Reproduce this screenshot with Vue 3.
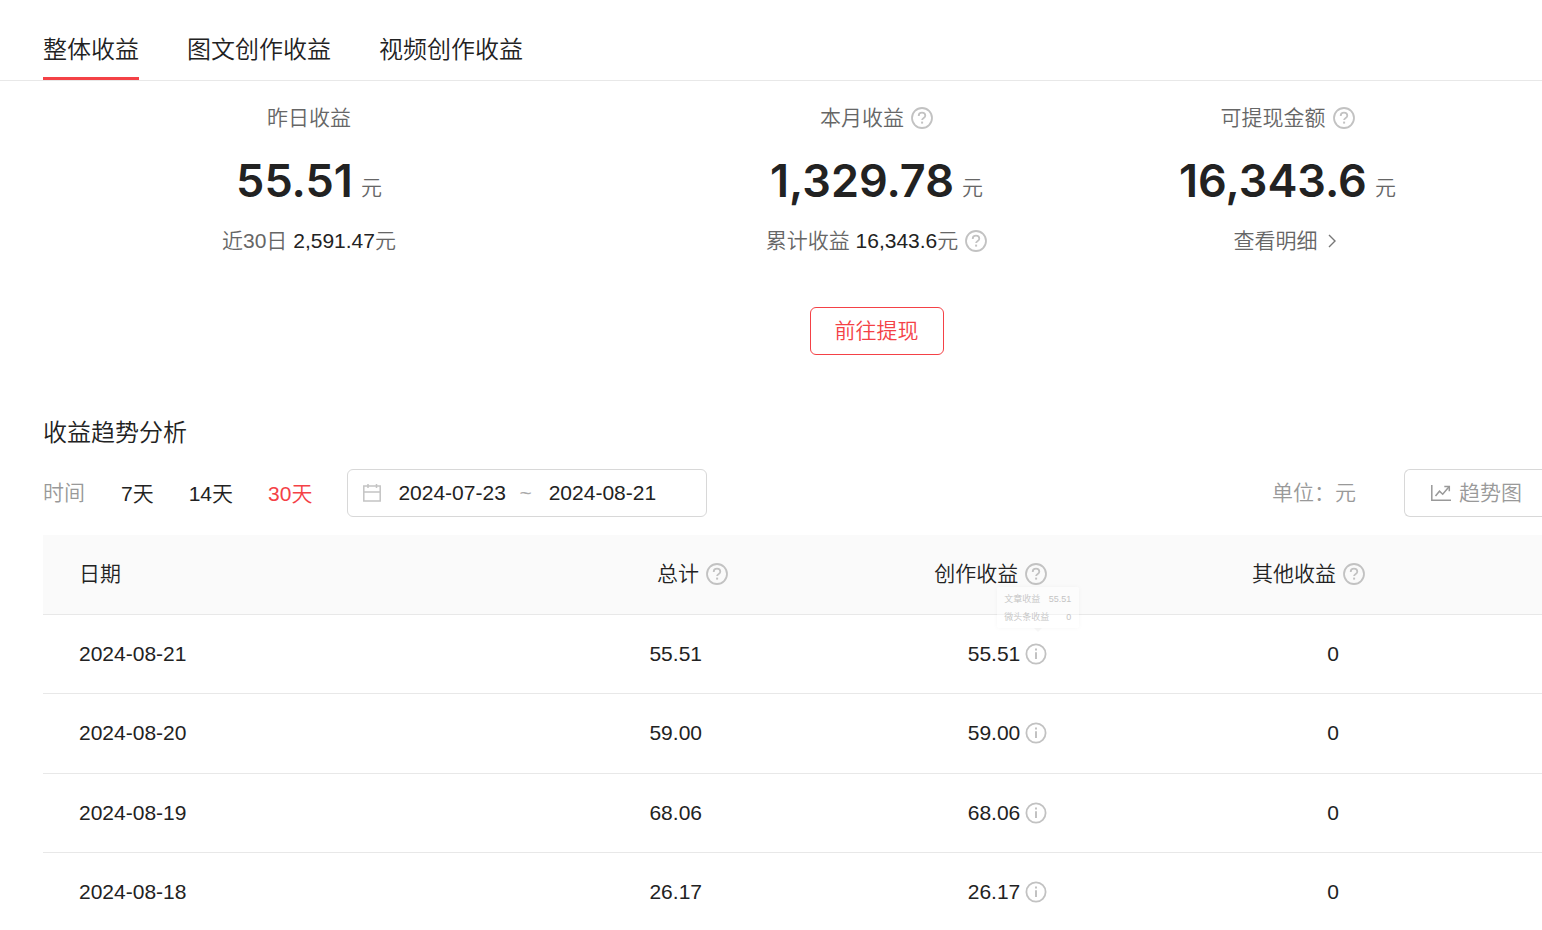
<script setup>
import { h, ref } from 'vue'

const QuestionIcon = () =>
  h('svg', { viewBox: '0 0 22 22', width: 22, height: 22, fill: 'none', stroke: '#c2c2c2', 'aria-hidden': 'true' }, [
    h('circle', { cx: 11, cy: 11, r: 10, 'stroke-width': 1.8 }),
    h('path', { d: 'M7.700 8.900c0-2 1.400-3.200 3.300-3.200s3.300 1.200 3.300 3c0 2.200-3.200 2.200-3.200 4.400', 'stroke-width': 1.8 }),
    h('path', { d: 'M10.1 14.600h2v2h-2z', fill: '#c2c2c2', stroke: 'none' }),
  ])

const InfoIcon = () =>
  h('svg', { viewBox: '0 0 22 22', width: 22, height: 22, fill: 'none', stroke: '#c2c2c2', 'aria-hidden': 'true' }, [
    h('circle', { cx: 11, cy: 11, r: 9.6, 'stroke-width': 1.8 }),
    h('path', { d: 'M11 9.2v6.8', 'stroke-width': 2 }),
    h('path', { d: 'M10 5.6h2v2h-2z', fill: '#c2c2c2', stroke: 'none' }),
  ])

const tabs = ['整体收益', '图文创作收益', '视频创作收益']
const activeTab = ref(0)

const ranges = ['7天', '14天', '30天']
const activeRange = ref(2)
const startDate = ref('2024-07-23')
const endDate = ref('2024-08-21')

const rows = [
  { date: '2024-08-21', total: '55.51', other: '0', tip: true },
  { date: '2024-08-20', total: '59.00', other: '0' },
  { date: '2024-08-19', total: '68.06', other: '0' },
  { date: '2024-08-18', total: '26.17', other: '0' },
]
</script>

<template>
  <main class="page">
    <nav class="tabs">
      <button
        v-for="(tab, i) in tabs"
        :key="tab"
        type="button"
        class="tab"
        :class="{ active: i === activeTab }"
        @click="activeTab = i"
      >{{ tab }}</button>
    </nav>

    <section class="stats">
      <div class="stat">
        <div class="label">昨日收益</div>
        <div class="amount"><strong>55.51</strong><span>元</span></div>
        <div class="sub">近30日&nbsp;<b>2,591.47</b>元</div>
      </div>
      <div class="stat">
        <div class="label">本月收益<QuestionIcon class="icon" /></div>
        <div class="amount"><strong>1,329.78</strong><span>元</span></div>
        <div class="sub">累计收益&nbsp;<b>16,343.6</b>元<QuestionIcon class="icon" /></div>
        <button type="button" class="withdraw">前往提现</button>
      </div>
      <div class="stat">
        <div class="label">可提现金额<QuestionIcon class="icon" /></div>
        <div class="amount"><strong>16,343.6</strong><span>元</span></div>
        <a href="#" class="sub">查看明细<svg class="arrow" viewBox="0 0 10 14" width="10" height="14" fill="none" stroke="#777" stroke-width="1.4" aria-hidden="true"><path d="M2 1l6 6-6 6" /></svg></a>
      </div>
    </section>

    <section class="trend">
      <h2>收益趋势分析</h2>
      <div class="filters">
        <span class="muted">时间</span>
        <div class="ranges">
          <button
            v-for="(range, i) in ranges"
            :key="range"
            type="button"
            :class="{ active: i === activeRange }"
            @click="activeRange = i"
          >{{ range }}</button>
        </div>
        <div class="picker">
          <svg viewBox="0 0 18 18" width="18" height="18" fill="none" stroke="#c4c4c4" stroke-width="1.5" aria-hidden="true">
            <path d="M.8 2h16.4v15H.8zM.8 8h16.4M5 0v4M13.500 0v4" />
          </svg>
          <input v-model="startDate" type="text" aria-label="开始日期" />
          <span class="tilde">~</span>
          <input v-model="endDate" type="text" aria-label="结束日期" />
        </div>
        <span class="muted unit">单位：元</span>
        <button type="button" class="chart">
          <svg viewBox="0 0 20 16" width="20" height="16" fill="none" stroke="#999" stroke-width="1.5" aria-hidden="true">
            <path d="M.8 0v15.200H20" />
            <path d="M4.500 11l4-4.800 3.200 3L17.800 2" />
            <path d="M13.300 1.600h5v4.600" />
          </svg>
          趋势图
        </button>
      </div>

      <table>
        <thead>
          <tr>
            <th class="date" scope="col">日期</th>
            <th class="total" scope="col"><span class="cell">总计<QuestionIcon class="icon" /></span></th>
            <th class="create" scope="col"><span class="cell">创作收益<QuestionIcon class="icon" /></span></th>
            <th class="other" scope="col"><span class="cell">其他收益<QuestionIcon class="icon" /></span></th>
          </tr>
        </thead>
        <tbody>
          <tr v-for="row in rows" :key="row.date">
            <td class="date">{{ row.date }}</td>
            <td class="total"><span class="cell plain">{{ row.total }}</span></td>
            <td class="create">
              <span class="cell">{{ row.total }}<span class="info"><InfoIcon /><span v-if="row.tip" class="tip" role="tooltip">
                <span class="tip-row"><span>文章收益</span><span>55.51</span></span>
                <span class="tip-row"><span>微头条收益</span><span>0</span></span>
              </span></span></span>
            </td>
            <td class="other"><span class="cell plain">{{ row.other }}</span></td>
          </tr>
        </tbody>
      </table>
    </section>
  </main>
</template>

<style>
body {
  margin: 0;
  background: #fff;
}
</style>

<style scoped>
.page {
  height: 100vh;
  overflow: hidden;
  font-family: "Liberation Sans", "Noto Sans CJK SC", sans-serif;
  font-size: 21px;
  font-weight: 350;
  line-height: 32px;
  color: #222;
}
svg {
  display: block;
  flex: none;
}
button,
input {
  margin: 0;
  padding: 0;
  border: 0;
  background: none;
  font: inherit;
  color: inherit;
}
button {
  cursor: pointer;
}
.tabs {
  display: flex;
  gap: 48px;
  height: 80px;
  padding-left: 43px;
  border-bottom: 1px solid #e8e8e8;
}
.tab {
  padding-top: 22px;
  border-bottom: 3px solid transparent;
  font-size: 24px;
}
.tab.active {
  border-color: #f44146;
}
.stats {
  display: grid;
  grid-template-columns: 618fr 517fr 305fr 102fr;
  padding-top: 21px;
}
.stat {
  display: flex;
  flex-direction: column;
  align-items: center;
  white-space: nowrap;
}
.label,
.sub {
  display: flex;
  align-items: center;
  color: #666;
  text-decoration: none;
}
.icon {
  margin-left: 7px;
}
.arrow {
  margin: 0 5px 0 9px;
}
.amount {
  display: flex;
  align-items: flex-end;
  height: 64px;
  margin: 15px 0 12px;
  line-height: 50px;
  color: #666;
}
.amount strong {
  margin-right: 8px;
  font-family: Inter, "Noto Sans", sans-serif;
  font-size: 45px;
  font-weight: 600;
  line-height: 64px;
  color: #222;
}
.sub b {
  font-weight: 400;
  color: #222;
}
.withdraw {
  height: 48px;
  margin-top: 50px;
  padding: 0 24px;
  border: 1px solid #f44146;
  border-radius: 6px;
  color: #f44146;
}
.trend {
  padding: 62px 0 0 43px;
}
h2 {
  margin: 0 0 20px;
  font-size: 24px;
  font-weight: 350;
}
.filters {
  display: flex;
  align-items: center;
  margin-bottom: 18px;
  white-space: nowrap;
}
.muted {
  color: #999;
}
.ranges {
  display: flex;
  gap: 35px;
  margin: 0 35px 0 36px;
  padding-top: 2px;
}
.ranges .active {
  color: #f44146;
}
.picker {
  display: flex;
  align-items: center;
  box-sizing: border-box;
  width: 360px;
  height: 48px;
  padding: 0 15px;
  border: 1px solid #d8d8d8;
  border-radius: 6px;
}
.picker input {
  width: 112px;
  margin-left: 17px;
}
.tilde {
  margin-left: 9px;
  color: #aaa;
}
.picker .tilde + input {
  margin-left: 17px;
}
.unit {
  margin-left: auto;
}
.chart {
  display: flex;
  align-items: center;
  gap: 8px;
  height: 48px;
  margin-left: 48px;
  padding: 0 20px 0 26px;
  border: 1px solid #d8d8d8;
  border-right: 0;
  border-radius: 6px 0 0 6px;
  color: #999;
}
table {
  width: 100%;
  table-layout: fixed;
  border-collapse: separate;
  border-spacing: 0;
}
th,
td {
  box-sizing: border-box;
  height: 79px;
  padding: 0 36px 0 0;
  border-bottom: 1px solid #e8e8e8;
  font-weight: 350;
  text-align: right;
}
th {
  height: 80px;
  padding-bottom: 2px;
  background: #fafafa;
}
tbody tr:nth-child(even) td {
  height: 80px;
  padding-bottom: 2px;
}
th.date,
td.date {
  padding-left: 36px;
  text-align: left;
}
.date {
  width: 27%;
}
.total {
  width: 21.1%;
}
.create {
  width: 21.3%;
}
.other {
  width: 30.6%;
}
th.other,
td.other {
  padding-right: 177px;
}
.cell {
  display: flex;
  align-items: center;
  justify-content: flex-end;
}
.plain {
  padding-right: 26px;
}
.info {
  position: relative;
  margin-left: 5px;
}
.tip {
  position: absolute;
  bottom: 37px;
  left: 50%;
  box-sizing: border-box;
  width: 82px;
  height: 41px;
  margin-left: -39px;
  padding: 3px 8px 0 7px;
  border-radius: 2px;
  background: rgba(255, 255, 255, 0.45);
  box-shadow: 0 0 5px rgba(0, 0, 0, 0.04);
  font-size: 9px;
  line-height: 18px;
  color: #c4c4c4;
}
.tip::after {
  content: "";
  position: absolute;
  top: 100%;
  left: 37px;
  border: 4px solid transparent;
  border-top-color: rgba(0, 0, 0, 0.03);
  border-bottom: 0;
}
.tip-row {
  display: flex;
  justify-content: space-between;
}
</style>
